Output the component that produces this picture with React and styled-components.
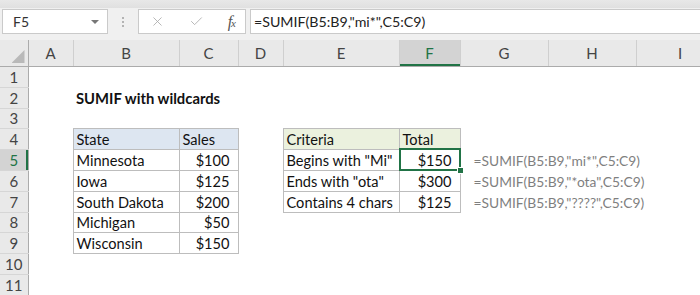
import React from 'react';
import styled, { createGlobalStyle } from 'styled-components';
import { X, Check } from 'lucide-react';

const GlobalStyle = createGlobalStyle`
  html, body {
    margin: 0;
    padding: 0;
    background: #fff;
    overflow: hidden;
  }
  body {
    font-family: Lato, "Open Sans", sans-serif;
  }
`;

const Window = styled.div`
  width: 700px;
  height: 295px;
  overflow: hidden;
  display: flex;
  flex-direction: column;
`;

const Ribbon = styled.div`
  height: 8px;
  background: linear-gradient(#e8e8e8, #e0e0e0);
  flex-shrink: 0;
`;

const FormulaBar = styled.div`
  display: flex;
  height: 25px;
  padding: 1px 0 6px 2px;
  background: #f0f0f0;
  flex-shrink: 0;
`;

const Box = styled.div`
  box-sizing: border-box;
  background: #fff;
  border: 1px solid #cacaca;
  display: flex;
  align-items: center;
`;

const NameBox = styled(Box)`
  width: 106px;
  justify-content: space-between;
  padding: 0 8px 0 10px;
  font-size: 14px;
  color: #333;
`;

const DropArrow = styled.span`
  width: 0;
  height: 0;
  border-left: 4px solid transparent;
  border-right: 4px solid transparent;
  border-top: 4px solid #777;
`;

const Grip = styled.div`
  width: 30px;
  display: flex;
  flex-direction: column;
  align-items: center;
  justify-content: center;
  gap: 2px;
`;

const GripDot = styled.span`
  width: 2px;
  height: 2px;
  background: #b3b3b3;
`;

const IconBox = styled(Box)`
  width: 108px;
  justify-content: space-between;
  padding: 0 10px 0 11px;
  color: #a8a8a8;
`;

const Fx = styled.span`
  font-family: "Liberation Serif", "DejaVu Serif", serif;
  font-style: italic;
  font-size: 16px;
  color: #555;
  letter-spacing: -1px;
  small {
    font-size: 11px;
  }
`;

const FormulaInput = styled(Box)`
  flex: 1;
  margin-left: 4px;
  padding-left: 3px;
  font-size: 14.2px;
  color: #222;
  white-space: nowrap;
  border-right: none;
`;

const Sheet = styled.table`
  border-collapse: collapse;
  table-layout: fixed;
  width: 724px;
  font-family: Lato, "Open Sans", sans-serif;
`;

const ColHead = styled.th`
  height: 26px;
  padding: 0;
  font-weight: 400;
  font-size: 15px;
  color: ${p => (p.$active ? '#217346' : '#444')};
  background: ${p => (p.$active ? '#d3d3d3' : '#e9e9e9')};
  border-right: 1px solid #cfcfcf;
  border-bottom: 1px solid #ababab;
  box-shadow: ${p => (p.$active ? 'inset 0 -2px 0 #217346' : 'none')};
`;

const Corner = styled.th`
  padding: 0;
  background: #e9e9e9;
  border-right: 1px solid #ababab;
  border-bottom: 1px solid #ababab;
`;

const CornerInner = styled.div`
  height: 26px;
  display: flex;
  justify-content: flex-end;
  align-items: flex-end;
  padding: 0 3px 3px 0;
  box-sizing: border-box;
`;

const CornerTriangle = styled.div`
  width: 13px;
  height: 13px;
  background: #b9b9b9;
  clip-path: polygon(100% 0, 100% 100%, 0 100%);
`;

const Row = styled.tr`
  height: 20.8px;
`;

const RowHead = styled.th`
  padding: 0;
  font-weight: 400;
  font-size: 15px;
  text-align: center;
  color: ${p => (p.$active ? '#217346' : '#444')};
  background: ${p => (p.$active ? '#d3d3d3' : '#e9e9e9')};
  border-right: 1px solid #ababab;
  border-bottom: 1px solid #d6d6d6;
  box-shadow: ${p => (p.$active ? 'inset -2px 0 0 #217346' : 'none')};
`;

const Cell = styled.td`
  position: relative;
  padding: ${p => (p.$align === 'right' ? '0 8px 0 3px' : `0 3px 0 ${p.$indent || 3}px`)};
  font-size: ${p => p.$size || 14.6}px;
  font-weight: ${p => (p.$bold ? 700 : 400)};
  color: ${p => p.$color || '#111'};
  text-align: ${p => p.$align || 'left'};
  white-space: nowrap;
  overflow: visible;
  vertical-align: bottom;
  line-height: 19px;
  background: ${p => p.$fill || 'transparent'};
  border: ${p => (p.$boxed ? '1px solid #bdbdbd' : 'none')};
`;

const Selection = styled.div`
  position: absolute;
  top: -2px;
  left: -1px;
  right: -1px;
  bottom: -1px;
  border: 2px solid #217346;
  pointer-events: none;
`;

const FillHandle = styled.div`
  position: absolute;
  right: -5px;
  bottom: -5px;
  width: 5px;
  height: 5px;
  background: #217346;
  border: 1px solid #fff;
`;

const columns = ['A', 'B', 'C', 'D', 'E', 'F', 'G', 'H', 'I'];
const widths = [28, 45, 106, 59, 45, 116, 61, 88, 88, 88];

const BLUE = '#dde6f1';
const GREEN = '#ebf1de';
const GRAY_TEXT = '#7f7f7f';

// cell content keyed by row number then column letter
const data = {
  2: { B: { v: 'SUMIF with wildcards', bold: true, size: 14.8 } },
  4: {
    B: { v: 'State', fill: BLUE, boxed: true },
    C: { v: 'Sales', fill: BLUE, boxed: true },
    E: { v: 'Criteria', fill: GREEN, boxed: true },
    F: { v: 'Total', fill: GREEN, boxed: true },
  },
  5: {
    B: { v: 'Minnesota', boxed: true },
    C: { v: '$100', align: 'right', boxed: true },
    E: { v: 'Begins with "Mi"', boxed: true },
    F: { v: '$150', align: 'right', boxed: true, selected: true },
    G: { v: '=SUMIF(B5:B9,"mi*",C5:C9)', color: GRAY_TEXT, size: 13.8, indent: 13 },
  },
  6: {
    B: { v: 'Iowa', boxed: true },
    C: { v: '$125', align: 'right', boxed: true },
    E: { v: 'Ends with "ota"', boxed: true },
    F: { v: '$300', align: 'right', boxed: true },
    G: { v: '=SUMIF(B5:B9,"*ota",C5:C9)', color: GRAY_TEXT, size: 13.8, indent: 13 },
  },
  7: {
    B: { v: 'South Dakota', boxed: true },
    C: { v: '$200', align: 'right', boxed: true },
    E: { v: 'Contains 4 chars', boxed: true },
    F: { v: '$125', align: 'right', boxed: true },
    G: { v: '=SUMIF(B5:B9,"????",C5:C9)', color: GRAY_TEXT, size: 13.8, indent: 13 },
  },
  8: {
    B: { v: 'Michigan', boxed: true },
    C: { v: '$50', align: 'right', boxed: true },
  },
  9: {
    B: { v: 'Wisconsin', boxed: true },
    C: { v: '$150', align: 'right', boxed: true },
  },
};

const rows = Array.from({ length: 11 }, (_, i) => i + 1);

export default function App() {
  return (
    <Window>
      <GlobalStyle />
      <Ribbon />
      <FormulaBar>
        <NameBox>
          F5
          <DropArrow />
        </NameBox>
        <Grip>
          <GripDot />
          <GripDot />
          <GripDot />
        </Grip>
        <IconBox>
          <X size={15} strokeWidth={1.3} />
          <Check size={15} strokeWidth={1.3} />
          <Fx>
            f<small>x</small>
          </Fx>
        </IconBox>
        <FormulaInput>=SUMIF(B5:B9,"mi*",C5:C9)</FormulaInput>
      </FormulaBar>
      <Sheet>
        <colgroup>
          {widths.map((w, i) => (
            <col key={i} style={{ width: w }} />
          ))}
        </colgroup>
        <thead>
          <tr>
            <Corner>
              <CornerInner>
                <CornerTriangle />
              </CornerInner>
            </Corner>
            {columns.map(c => (
              <ColHead key={c} $active={c === 'F'}>
                {c}
              </ColHead>
            ))}
          </tr>
        </thead>
        <tbody>
          {rows.map(r => (
            <Row key={r}>
              <RowHead $active={r === 5}>{r}</RowHead>
              {columns.map(c => {
                const cell = (data[r] && data[r][c]) || {};
                return (
                  <Cell
                    key={c}
                    $bold={cell.bold}
                    $fill={cell.fill}
                    $boxed={cell.boxed}
                    $align={cell.align}
                    $color={cell.color}
                    $size={cell.size}
                    $indent={cell.indent}
                  >
                    {cell.v}
                    {cell.selected && (
                      <Selection>
                        <FillHandle />
                      </Selection>
                    )}
                  </Cell>
                );
              })}
            </Row>
          ))}
        </tbody>
      </Sheet>
    </Window>
  );
}
